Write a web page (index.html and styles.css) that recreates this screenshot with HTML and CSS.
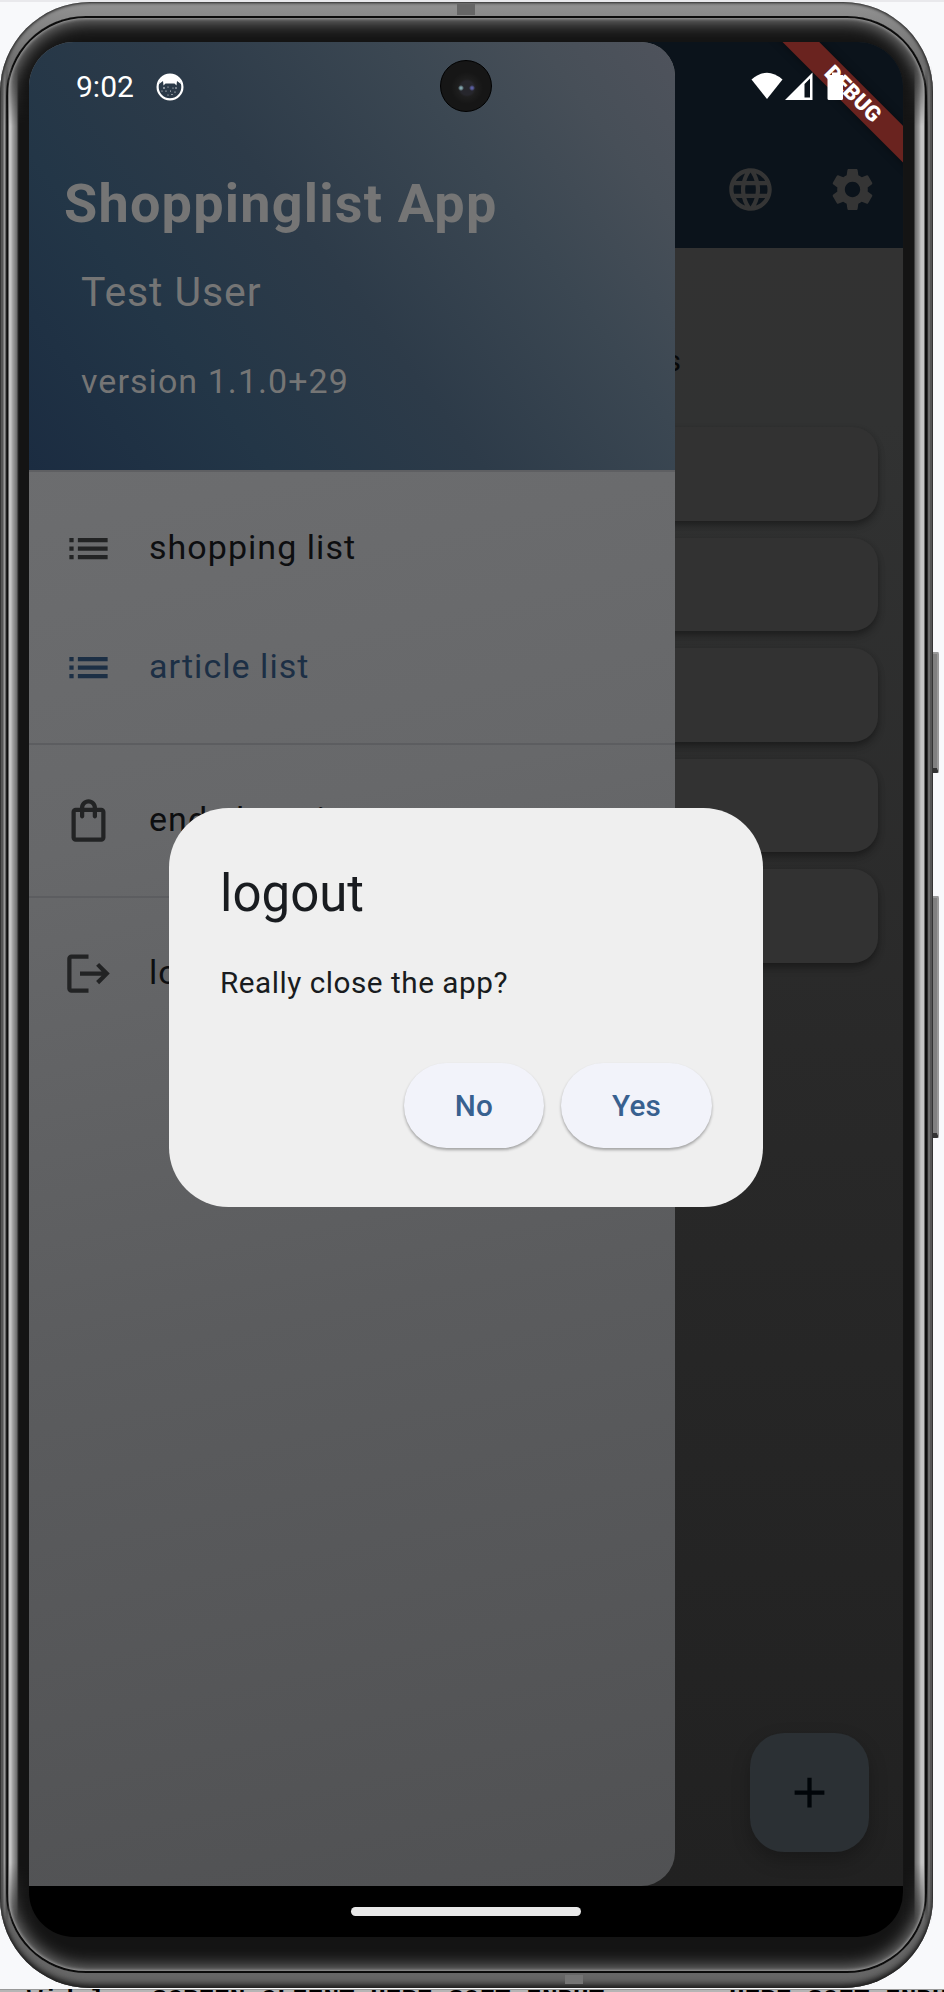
FILE: index.html
```html
<!DOCTYPE html>
<html lang="en">
<head>
<meta charset="utf-8">
<title>Shoppinglist App</title>
<link rel="stylesheet" href="styles.css">
</head>
<body>
<div class="key key-power"></div>
<div class="key key-volume"></div>
<div class="phone">
  <span class="antenna antenna-top"></span>
  <span class="antenna antenna-bottom"></span>
  <div class="bezel">
    <div class="screen">
      <div class="app">
        <header class="appbar">
          <svg class="icon" viewBox="0 0 24 24"><path d="M11.99 2C6.47 2 2 6.48 2 12s4.47 10 9.99 10C17.52 22 22 17.52 22 12S17.52 2 11.99 2zm6.93 6h-2.95c-.32-1.25-.78-2.45-1.38-3.56 1.84.63 3.37 1.91 4.33 3.56zM12 4.04c.83 1.2 1.48 2.53 1.91 3.96h-3.82c.43-1.43 1.08-2.76 1.91-3.96zM4.26 14C4.1 13.36 4 12.69 4 12s.1-1.36.26-2h3.38c-.08.66-.14 1.32-.14 2 0 .68.06 1.34.14 2H4.26zm.82 2h2.95c.32 1.25.78 2.45 1.38 3.56-1.84-.63-3.37-1.9-4.33-3.56zm2.95-8H5.08c.96-1.66 2.49-2.93 4.33-3.56C8.81 5.55 8.35 6.75 8.03 8zM12 19.96c-.83-1.2-1.48-2.53-1.91-3.96h3.82c-.43 1.43-1.08 2.76-1.91 3.96zM14.34 14H9.66c-.09-.66-.16-1.32-.16-2 0-.68.07-1.35.16-2h4.68c.09.65.16 1.32.16 2 0 .68-.07 1.34-.16 2zm.25 5.56c.6-1.11 1.06-2.31 1.38-3.56h2.95c-.96 1.65-2.49 2.93-4.33 3.56zM16.36 14c.08-.66.14-1.32.14-2 0-.68-.06-1.34-.14-2h3.38c.16.64.26 1.31.26 2s-.1 1.36-.26 2h-3.38z"/></svg>
          <svg class="icon" viewBox="0 0 24 24"><path d="M19.14 12.94c.04-.3.06-.61.06-.94 0-.32-.02-.64-.07-.94l2.03-1.58c.18-.14.23-.41.12-.61l-1.92-3.32c-.12-.22-.37-.29-.59-.22l-2.39.96c-.5-.38-1.03-.7-1.62-.94l-.36-2.54c-.04-.24-.24-.41-.48-.41h-3.84c-.24 0-.43.17-.47.41l-.36 2.54c-.59.24-1.13.57-1.62.94l-2.39-.96c-.22-.08-.47 0-.59.22L2.74 8.87c-.12.21-.08.47.12.61l2.03 1.58c-.05.3-.09.63-.09.94s.02.64.07.94l-2.03 1.58c-.18.14-.23.41-.12.61l1.92 3.32c.12.22.37.29.59.22l2.39-.96c.5.38 1.03.7 1.62.94l.36 2.54c.05.24.24.41.48.41h3.84c.24 0 .44-.17.47-.41l.36-2.54c.59-.24 1.13-.56 1.62-.94l2.39.96c.22.08.47 0 .59-.22l1.92-3.32c.12-.22.07-.47-.12-.61l-2.01-1.58zM12 15.6c-1.98 0-3.6-1.62-3.6-3.6s1.62-3.6 3.6-3.6 3.6 1.62 3.6 3.6-1.62 3.6-3.6 3.6z"/></svg>
        </header>
        <main class="page">
          <p class="page-title">articles</p>
          <div class="cards">
            <div class="card"></div>
            <div class="card"></div>
            <div class="card"></div>
            <div class="card"></div>
            <div class="card"></div>
          </div>
        </main>
        <div class="fab"><svg class="icon" viewBox="0 0 24 24"><path d="M19 13h-6v6h-2v-6H5v-2h6V5h2v6h6z"/></svg></div>
        <div class="banner">DEBUG</div>
        <aside class="drawer">
          <div class="drawer-header">
            <h1>Shoppinglist App</h1>
            <p class="user">Test User</p>
            <p class="version">version 1.1.0+29</p>
          </div>
          <nav>
            <a class="item"><svg class="icon" viewBox="0 0 24 24"><path d="M3 13h2v-2H3zm0 4h2v-2H3zm0-8h2V7H3zm4 4h14v-2H7zm0 4h14v-2H7zM7 7v2h14V7z"/></svg><span>shopping list</span></a>
            <a class="item active"><svg class="icon" viewBox="0 0 24 24"><path d="M3 13h2v-2H3zm0 4h2v-2H3zm0-8h2V7H3zm4 4h14v-2H7zm0 4h14v-2H7zM7 7v2h14V7z"/></svg><span>article list</span></a>
            <hr>
            <a class="item"><svg class="icon" viewBox="0 0 24 24"><path d="M18 6h-2c0-2.21-1.79-4-4-4S8 3.79 8 6H6c-1.1 0-2 .9-2 2v12c0 1.1.9 2 2 2h12c1.1 0 2-.9 2-2V8c0-1.1-.9-2-2-2zm-6-2c1.1 0 2 .9 2 2h-4c0-1.1.9-2 2-2zm6 16H6V8h2v2c0 .55.45 1 1 1s1-.45 1-1V8h4v2c0 .55.45 1 1 1s1-.45 1-1V8h2v12z"/></svg><span>end shopping</span></a>
            <hr>
            <a class="item"><svg class="icon" viewBox="0 0 24 24"><path d="M17 7l-1.41 1.41L18.17 11H8v2h10.17l-2.58 2.58L17 17l5-5zM4 5h8V3H4c-1.1 0-2 .9-2 2v14c0 1.1.9 2 2 2h8v-2H4z"/></svg><span>logout</span></a>
          </nav>
        </aside>
      </div>
      <div class="navbar"><span class="handle"></span></div>
      <div class="statusbar">
        <span class="clock">9:02</span>
        <svg class="cat" viewBox="0 0 28 28"><circle cx="14" cy="14" r="12.4" fill="none" stroke="#fff" stroke-width="2.2"/><path fill="#fff" d="M3 11Q5 2 14 1.5Q23 2 25 11L21 8L20.500 12.500L18.500 10.500H9.500L7.500 12.500L7 8Z"/><g fill="#fff"><circle cx="8" cy="15" r=".8"/><circle cx="12" cy="14" r=".5"/><circle cx="17" cy="15" r=".5"/><circle cx="20" cy="15" r=".7"/><circle cx="6" cy="18" r=".5"/><circle cx="10" cy="18" r=".6"/><circle cx="14.500" cy="18" r=".5"/><circle cx="19" cy="19" r=".6"/><circle cx="12" cy="22" r=".5"/><circle cx="16" cy="21.500" r=".6"/></g></svg>
        <svg class="signals" viewBox="0 0 96 32"><path d="M0.500 8.500Q16 -5 31.500 8.500L16 28Z"/><path fill-rule="evenodd" d="M34 29L61.500 1.500V29ZM53.500 13V26.500H59V7.500Z"/><path d="M81 1.500h6.500v2.500h4.500v23.500q0 1.500-1.500 1.500h-12.500q-1.500 0-1.500-1.500V5.500q0-1.500 1.500-1.500h3z"/></svg>
      </div>
      <div class="camera"></div>
      <section class="dialog">
        <h2>logout</h2>
        <p>Really close the app?</p>
        <div class="actions"><button class="no">No</button><button class="yes">Yes</button></div>
      </section>
    </div>
  </div>
</div>
<pre class="footer">Wid l   SCREEN_CLIENT_HERE_SOFT_INPUT        HERE_SOFT_INPUT</pre>
</body>
</html>
```
FILE: styles.css
```css
* { box-sizing: border-box; margin: 0; padding: 0; }
html { overflow: hidden; }
body {
  position: relative;
  width: 944px;
  height: 1992px;
  overflow: hidden;
  padding-top: 2px;
  background: linear-gradient(#e9e9ec 2px, #f8f9fb 2px);
  font-family: Roboto, "Liberation Sans", sans-serif;
}

/* device frame */
.phone {
  position: relative;
  width: 933px;
  height: 1986px;
  padding: 14px 6px 15px 6px;
  border-radius: 90px;
  background: linear-gradient(#929292, #707070 60px, #686868 1900px, #666);
  box-shadow: inset 0 0 3px 1px #222, inset 0 -5px 6px -1px #222;
}
.bezel {
  position: relative;
  height: 1957px;
  padding: 26px 23px 34px;
  border-radius: 80px;
  background: #141414;
  box-shadow: inset 0 0 0 2px #0c0c0c, inset 0 0 3px 3px #999, inset 0 0 18px 5px #8a8a8a;
}
.bezel::before, .bezel::after {
  content: "";
  position: absolute;
  top: 50px;
  bottom: 50px;
  width: 23px;
  -webkit-mask-image: linear-gradient(transparent, #000 60px, #000 calc(100% - 60px), transparent);
  mask-image: linear-gradient(transparent, #000 60px, #000 calc(100% - 60px), transparent);
}
.bezel::before {
  left: -5px;
  width: 28px;
  background: linear-gradient(90deg, #555 0 2px, #999 3px 4px, #333 5px, #0c0c0c 6px 7px, #c4c4c4 8px 10px, #aaa 11px, #6b6b6b 16px, #2a2a2a 17px, #141414 18px);
}
.bezel::after {
  right: -5px;
  width: 28px;
  background: linear-gradient(270deg, #555 0 2px, #888 3px, #0c0c0c 5px 7px, #c4c4c4 8px 11px, #999 13px, #6b6b6b 17px, #141414 18px);
}
.antenna { position: absolute; width: 18px; }
.antenna-top { left: 457px; top: 2px; height: 11px; background: #666; }
.antenna-bottom { left: 565px; bottom: 4px; height: 9px; background: #757575; }
.key {
  position: absolute;
  left: 930px;
  width: 9px;
  border: solid #999;
  border-width: 2px 2px 0 1px;
  border-bottom: 5px solid #333;
  border-radius: 2px;
  background: #808080;
}
.key-power { top: 652px; height: 121px; }
.key-volume { top: 896px; height: 242px; }

.screen {
  position: relative;
  z-index: 1;
  display: flex;
  flex-direction: column;
  width: 874px;
  height: 1895px;
  border-radius: 45px;
  overflow: hidden;
  background: #000;
}
.app {
  position: relative;
  height: 1844px;
  overflow: hidden;
  background: linear-gradient(#323232 206px, #313232 380px, #292929 1000px, #212121);
}
.icon { width: 51px; height: 51px; flex: none; fill: currentColor; }
.appbar {
  display: flex;
  justify-content: flex-end;
  gap: 51px;
  height: 206px;
  padding: 122px 25.5px 0 0;
  background: #0b131b;
  color: #353535;
}
.page-title {
  width: 652px;
  padding-top: 93px;
  height: 179px;
  font-size: 30px;
  line-height: 40px;
  text-align: right;
  color: #080808;
}
.cards { display: flex; flex-direction: column; gap: 17px; padding: 0 25px; }
.card {
  height: 93.6px;
  border-radius: 25px;
  background: #323232;
  box-shadow: 0 3px 6px rgba(0, 0, 0, .28), 0 6px 9px rgba(0, 0, 0, .14);
}
.fab {
  position: absolute;
  right: 34px;
  bottom: 34px;
  display: grid;
  place-items: center;
  width: 119px;
  height: 119px;
  border-radius: 34px;
  background: #2b3034;
  color: #010509;
  box-shadow: 0 8px 18px rgba(0, 0, 0, .25);
}
.banner {
  position: absolute;
  left: 711.5px;
  top: 38.5px;
  width: 224px;
  height: 25.5px;
  transform: rotate(45deg);
  background: #6a231f;
  color: #fff;
  font-size: 21.7px;
  line-height: 25.5px;
  font-weight: 900;
  text-align: center;
  box-shadow: 0 0 10px rgba(0, 0, 0, .4);
}

/* drawer */
.drawer {
  position: absolute;
  left: 0;
  top: 0;
  width: 646px;
  height: 1844px;
  border-radius: 0 34px 34px 0;
  overflow: hidden;
  background: linear-gradient(168deg, #6c6d6f 400px, #67686a 800px, #5b5c5e 1300px, #505153);
}
.drawer-header {
  height: 430px;
  padding: 132px 34px 0 35px;
  border-bottom: 2px solid #5e5f62;
  background: linear-gradient(53deg, #1b2c41, #233647 25%, #2d3b49 47%, #3b4752 70%, #474f58 86%, #4f535c);
  color: #757575;
}
.drawer-header h1 { font-size: 54px; line-height: 60px; font-weight: 700; letter-spacing: 1.2px; white-space: nowrap; }
.drawer-header p { padding-left: 17px; line-height: 60px; }
.user { margin-top: 28px; font-size: 41px; letter-spacing: .9px; }
.version { margin-top: 28.5px; font-size: 34px; letter-spacing: 1.06px; }
nav { padding-top: 17px; }
.item {
  display: flex;
  align-items: center;
  gap: 35px;
  height: 119px;
  padding-left: 34px;
  font-size: 34px;
  letter-spacing: 1.04px;
  color: #0d0e10;
}
.item span { padding-bottom: 3px; }
.item .icon { color: #222324; }
.item.active, .item.active .icon { color: #1c2f45; }
hr { height: 2px; margin: 16px 0; border: 0; background: #5c5d60; }

/* system bars */
.navbar { display: grid; place-items: center; height: 51px; }
.handle { width: 230px; height: 9px; border-radius: 5px; background: #e8e8e8; }
.statusbar {
  position: absolute;
  inset: 0 0 auto 0;
  display: flex;
  align-items: center;
  height: 89px;
  padding-left: 47px;
  color: #fff;
}
.clock { font-size: 30px; width: 80px; }
.cat { width: 28px; height: 28px; }
.signals { width: 96px; height: 32px; margin-left: auto; margin-right: 56.5px; fill: #fff; }
.camera {
  position: absolute;
  left: 411px;
  top: 18px;
  width: 52px;
  height: 52px;
  border: 1px solid #000;
  border-radius: 50%;
  background:
    radial-gradient(circle at 20px 27px, #7fa3aa 0 1px, transparent 3px),
    radial-gradient(circle at 31px 27px, #5a5ea0 0 1px, transparent 3px),
    radial-gradient(circle at 26px 27px, #26262c 0 7px, #1e1e1e 9px, #161616 16px);
}

/* dialog */
.dialog {
  position: absolute;
  left: 140px;
  top: 766px;
  width: 594px;
  height: 399px;
  padding: 52px 51px 0;
  border-radius: 59.5px;
  background: #efefef;
  color: #191c20;
}
.dialog h2 { font-size: 51px; line-height: 68px; font-weight: 400; }
.dialog p { margin-top: 34px; font-size: 29.7px; line-height: 42px; letter-spacing: .53px; }
.actions { display: flex; justify-content: flex-end; gap: 17px; margin-top: 59px; }
.actions button {
  width: 140px;
  height: 85px;
  border: 0;
  border-radius: 43px;
  background: #f2f3fa;
  color: #38608f;
  font: 500 29.7px Roboto, sans-serif;
  letter-spacing: .21px;
  box-shadow: 0 2px 3px rgba(0, 0, 0, .32);
}
.actions .yes { width: 151px; }

.footer {
  height: 3px;
  margin-top: 1px;
  padding-left: 27px;
  overflow: hidden;
  background: linear-gradient(#999 1px, #b5b5b5 1px);
  color: #000;
  font: 700 26px/22px "Liberation Mono", monospace;
}
```
